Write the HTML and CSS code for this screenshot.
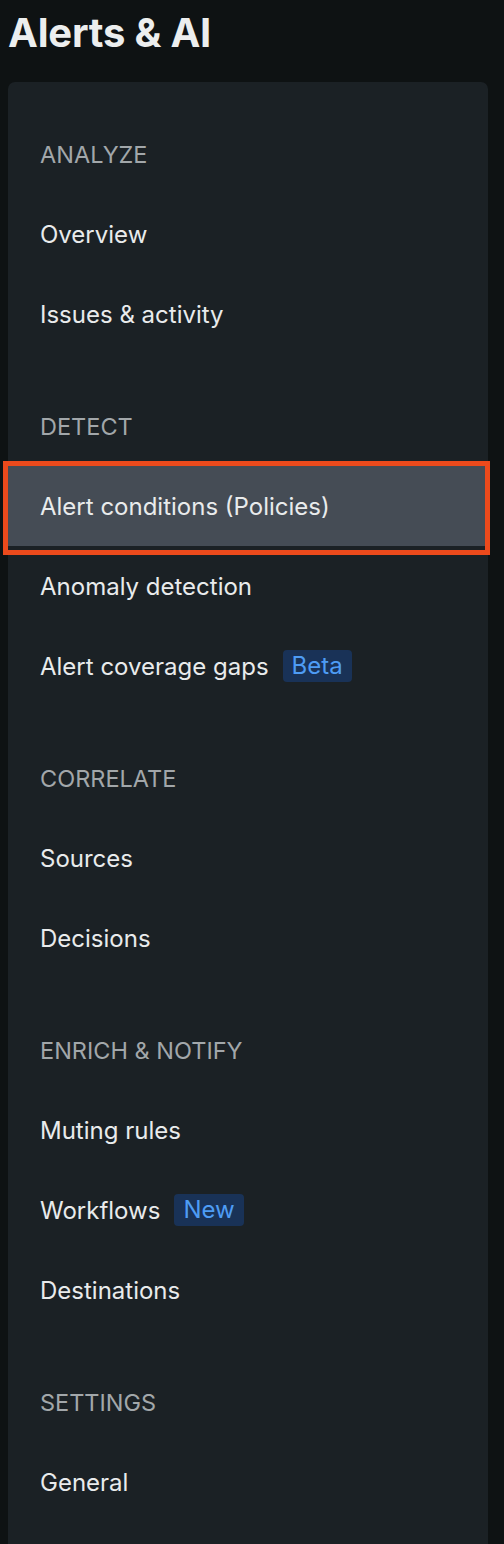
FILE: index.html
```html
<!DOCTYPE html>
<html>
<head>
<meta charset="utf-8">
<link rel="stylesheet" href="styles.css">
</head>
<body>
<h1 class="title">Alerts &amp; AI</h1>
<nav class="panel">
  <div class="section">
    <div class="heading">ANALYZE</div>
    <div class="item">Overview</div>
    <div class="item">Issues &amp; activity</div>
  </div>
  <div class="section">
    <div class="heading">DETECT</div>
    <div class="item selected">Alert conditions (Policies)<span class="annot"></span></div>
    <div class="item">Anomaly detection</div>
    <div class="item">Alert coverage gaps <span class="badge">Beta</span></div>
  </div>
  <div class="section">
    <div class="heading">CORRELATE</div>
    <div class="item">Sources</div>
    <div class="item">Decisions</div>
  </div>
  <div class="section">
    <div class="heading">ENRICH &amp; NOTIFY</div>
    <div class="item">Muting rules</div>
    <div class="item">Workflows <span class="badge">New</span></div>
    <div class="item">Destinations</div>
  </div>
  <div class="section">
    <div class="heading">SETTINGS</div>
    <div class="item">General</div>
  </div>
</nav>
</body>
</html>
```
FILE: styles.css
```css
html, body {
  margin: 0;
  padding: 0;
  background: #0e1213;
  font-family: Inter, "Noto Sans", sans-serif;
  overflow: hidden;
}
body {
  padding: 0 16px 0 8px;
  height: 1544px;
}
.title {
  margin: 0;
  height: 82px;
  box-sizing: border-box;
  padding-top: 11px;
  font-size: 40px;
  line-height: 44px;
  font-weight: 700;
  color: #eceeee;
  letter-spacing: -0.2px;
}
.panel {
  background: #1b2125;
  border-radius: 7px;
  width: 480px;
  padding: 32px 0 200px;
  display: flex;
  flex-direction: column;
  gap: 32px;
}
.section {
  display: flex;
  flex-direction: column;
}
.heading, .item {
  height: 80px;
  display: flex;
  align-items: center;
  padding-left: 32px;
  font-size: 24px;
  box-sizing: border-box;
}
.heading {
  color: #a2a7aa;
  font-weight: 400;
  font-size: 23.5px;
}
.item {
  color: #e9ebec;
  position: relative;
}
.item.selected {
  background: #454c55;
  margin-right: 3px;
}
.annot {
  position: absolute;
  left: -5px;
  top: -5px;
  width: 487px;
  height: 94px;
  box-sizing: border-box;
  border: 5px solid #ec4a1c;
  pointer-events: none;
}
.badge {
  margin-left: 14px;
  background: #193257;
  color: #4e9cf4;
  border-radius: 4px;
  padding: 0 9px;
  height: 32px;
  line-height: 32px;
  font-size: 24px;
}
```
